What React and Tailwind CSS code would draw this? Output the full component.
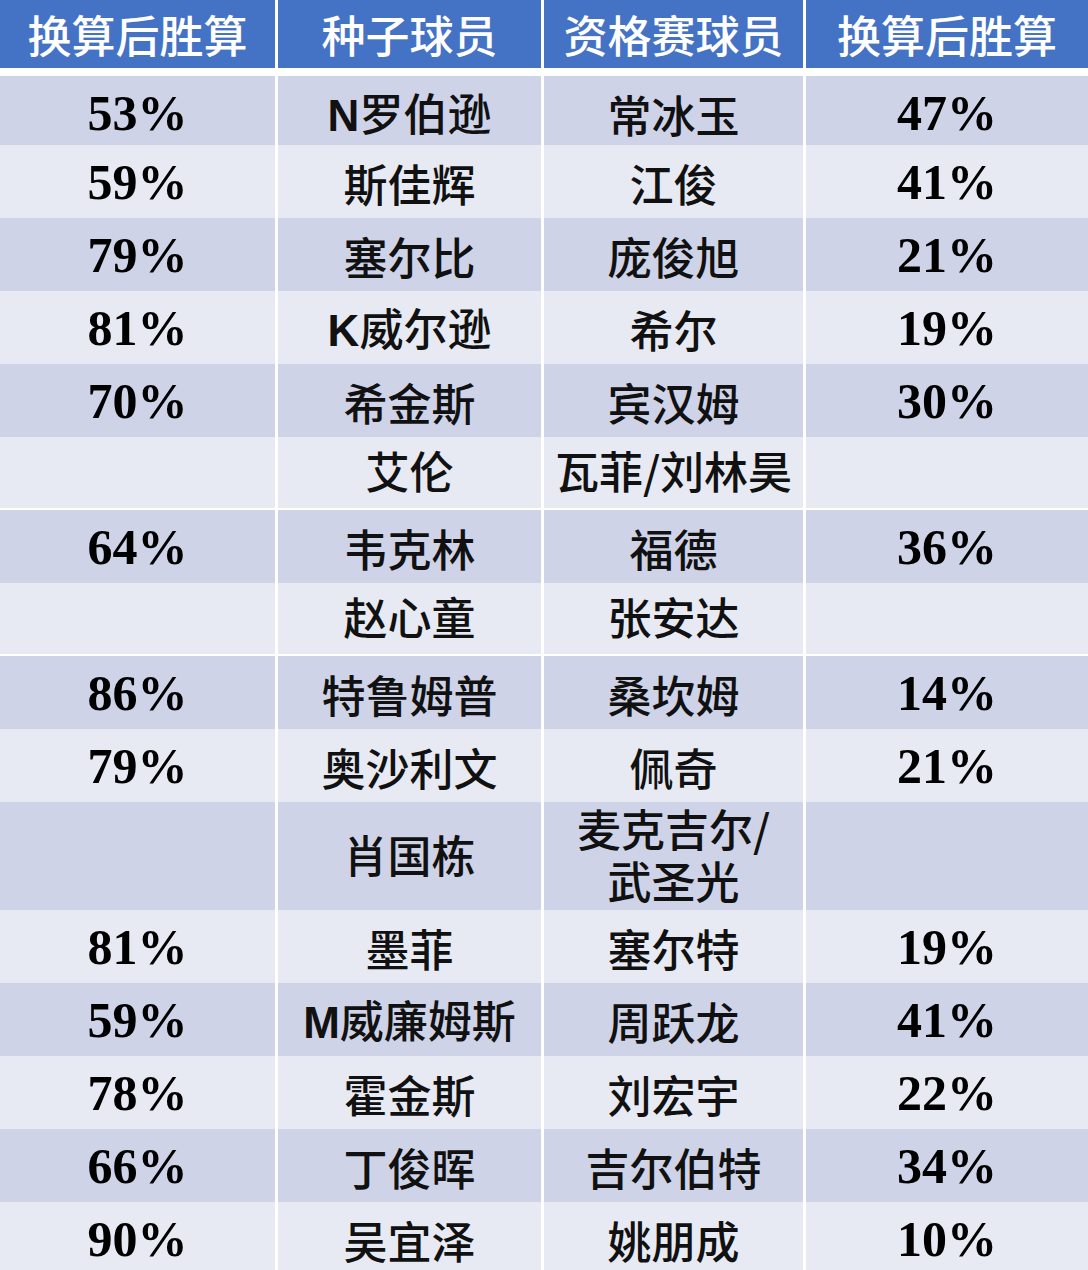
import React from "react";

const headers = ["换算后胜算", "种子球员", "资格赛球员", "换算后胜算"];

const rows = [
  ["53%", "N罗伯逊", "常冰玉", "47%"],
  ["59%", "斯佳辉", "江俊", "41%"],
  ["79%", "塞尔比", "庞俊旭", "21%"],
  ["81%", "K威尔逊", "希尔", "19%"],
  ["70%", "希金斯", "宾汉姆", "30%"],
  ["", "艾伦", "瓦菲/刘林昊", ""],
  ["64%", "韦克林", "福德", "36%"],
  ["", "赵心童", "张安达", ""],
  ["86%", "特鲁姆普", "桑坎姆", "14%"],
  ["79%", "奥沙利文", "佩奇", "21%"],
  ["", "肖国栋", "麦克吉尔/\n武圣光", ""],
  ["81%", "墨菲", "塞尔特", "19%"],
  ["59%", "M威廉姆斯", "周跃龙", "41%"],
  ["78%", "霍金斯", "刘宏宇", "22%"],
  ["66%", "丁俊晖", "吉尔伯特", "34%"],
  ["90%", "吴宜泽", "姚朋成", "10%"],
];

const cjk = "font-['Noto_Sans_CJK_SC',sans-serif]";
const serif = "font-['Liberation_Serif','Times_New_Roman',serif]";

// leading latin initial (N, K, M) is set in bold Arial-like face
const Name = ({ text }) => {
  const m = text.match(/^([A-Z])(.*)$/);
  if (!m) return <span>{text}</span>;
  return (
    <span>
      <span className="font-['Liberation_Sans',sans-serif] font-bold">{m[1]}</span>
      {m[2]}
    </span>
  );
};

// two-line qualifier cell goes in one text block with a line break
const Qualifier = ({ text }) => {
  const lines = text.split("\n");
  if (lines.length === 1) return <span>{text}</span>;
  return (
    <p className="text-center leading-[52px] whitespace-pre-line">{text}</p>
  );
};

export default function App() {
  return (
    <div className="w-[1088px] h-[1270px] bg-white overflow-hidden">
      <div className="grid grid-cols-[275px_263px_259px_1fr] gap-x-[3px] h-[68px]">
        {headers.map((h, i) => (
          <div
            key={i}
            className={`bg-[#4472c4] flex items-center justify-center text-white text-[44px] font-medium ${cjk}`}
          >
            {h}
          </div>
        ))}
      </div>
      <div className="flex flex-col gap-y-[2px] mt-[8px]">
        {rows.map((r, i) => {
          const bg = i % 2 === 0 ? "bg-[#ced3e8]" : "bg-[#e7eaf2]";
          const tall = r[2].includes("\n");
          const last = i === rows.length - 1;
          const h = tall
            ? "h-[106px]"
            : i === 0 || last
            ? "h-[67px]"
            : "h-[71px]";
          const padCjk = last ? "pb-[1px]" : "pb-[5px]";
          const padNum = last ? "pb-[2px]" : "pb-[6px]";
          return (
            <div
              key={i}
              className={`grid grid-cols-[275px_263px_259px_1fr] gap-x-[3px] shrink-0 ${h}`}
            >
              <div className={`${bg} flex items-center justify-center ${padNum} text-[50px] font-bold text-black ${serif}`}>
                {r[0]}
              </div>
              <div className={`${bg} flex items-center justify-center ${padCjk} text-[44px] font-medium text-[#111] ${cjk}`}>
                <Name text={r[1]} />
              </div>
              <div className={`${bg} flex items-center justify-center ${padCjk} text-[44px] font-medium text-[#111] ${cjk}`}>
                <Qualifier text={r[2]} />
              </div>
              <div className={`${bg} flex items-center justify-center ${padNum} text-[50px] font-bold text-black ${serif}`}>
                {r[3]}
              </div>
            </div>
          );
        })}
      </div>
    </div>
  );
}
